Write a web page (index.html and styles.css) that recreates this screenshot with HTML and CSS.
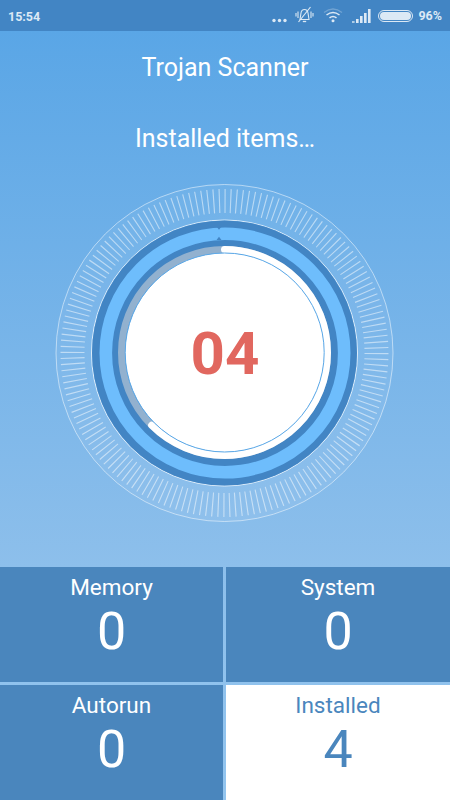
FILE: index.html
```html
<!DOCTYPE html>
<html lang="en">
<head>
  <meta charset="UTF-8" />
  <meta name="viewport" content="width=device-width, initial-scale=1.0"/>
  <title>Trojan Scanner</title>
  <link rel="stylesheet" href="styles.css">
</head>
<body>
  <div class="screen">
    <div class="statusbar">
      <span class="clock">15:54</span>
      <div class="status-icons">
        <svg class="ic-dots" width="15" height="5" viewBox="0 0 15 5">
          <circle cx="2" cy="2.5" r="1.7"/><circle cx="7.5" cy="2.5" r="1.7"/><circle cx="13" cy="2.5" r="1.7"/>
        </svg>
        <!-- vibrate / muted bell -->
        <svg class="ic-bell" width="19" height="19" viewBox="0 0 19 19" fill="none">
          <path d="M5 13.5 L6 7 Q6.5 3.5 9.5 3.5 Q12.5 3.5 13 7 L14 13.5 Z" stroke-width="1.1"/>
          <path d="M7.8 15.5 H11.2" stroke-width="1.3"/>
          <path d="M3 5.5 V12 M1 7 V10.5 M16 5.5 V12 M18 7 V10.5" stroke-width="1.1"/>
          <path d="M15.5 1 L3.5 16" stroke-width="1.2"/>
        </svg>
        <svg class="ic-wifi" width="20" height="15" viewBox="0 0 20 15" fill="none">
          <path d="M1 4.5 Q10 -2.5 19 4.5" stroke-width="1.4" opacity="0.3"/>
          <path d="M3.5 7 Q10 2 16.5 7" stroke-width="1.5"/>
          <path d="M6.5 9.8 Q10 7 13.5 9.8" stroke-width="1.5"/>
          <circle class="solid" cx="10" cy="12.7" r="1.5"/>
        </svg>
        <svg class="ic-signal" width="20" height="14" viewBox="0 0 20 14">
          <rect x="0" y="12" width="2.6" height="2" opacity="0.7"/>
          <rect x="4" y="10" width="2.6" height="4"/>
          <rect x="8" y="7" width="2.6" height="7"/>
          <rect x="12" y="4" width="2.6" height="10"/>
          <rect x="16" y="0" width="2.6" height="14"/>
        </svg>
        <div class="battery"><div class="battery-fill"></div></div>
        <span class="percent">96%</span>
      </div>
    </div>

    <div class="main">
      <h1 class="title">Trojan Scanner</h1>
      <p class="subtitle">Installed items…</p>

      <svg class="gauge" viewBox="0 0 450 345" xmlns="http://www.w3.org/2000/svg">
        <!-- outer band with ticks -->
        <circle class="band" cx="224.5" cy="172" r="168.5"/>
        <circle class="ticks" cx="224.5" cy="172" r="152" pathLength="840" transform="rotate(-90 224.5 172)"/>
        <circle class="band-inner" cx="224.5" cy="172" r="133"/>

        <!-- dark and light rings -->
        <circle class="ring-dark" cx="224.5" cy="172" r="132.5"/>
        <circle class="ring-light" cx="225" cy="172" r="119.2"/>
        <path class="notch" d="M216.5 45.5 h5 l-2.5 3.2 Z M216.5 59 h5 l-2.5 -3.2 Z"/>

        <!-- progress track, the thin line of the disc stays on top of it -->
        <circle class="track" cx="224.5" cy="171.5" r="103"/>
        <circle class="progress" cx="224.5" cy="171.5" r="103" pathLength="360" transform="rotate(-90 224.5 171.5)"/>
        <circle class="disc" cx="224.7" cy="171.5" r="99.5"/>

        <text class="count" x="225" y="193">04</text>
      </svg>

      <div class="stats">
        <div class="stat">
          <span class="stat-label">Memory</span>
          <span class="stat-value">0</span>
        </div>
        <div class="stat">
          <span class="stat-label">System</span>
          <span class="stat-value">0</span>
        </div>
        <div class="stat">
          <span class="stat-label">Autorun</span>
          <span class="stat-value">0</span>
        </div>
        <div class="stat active">
          <span class="stat-label">Installed</span>
          <span class="stat-value">4</span>
        </div>
      </div>
    </div>
  </div>
</body>
</html>
```

FILE: styles.css
```css
body {
  margin: 0;
  font-family: Roboto, "Liberation Sans", sans-serif;
  background: #5aa6e6;
}
.screen {
  width: 450px;
  height: 800px;
  display: flex;
  flex-direction: column;
  overflow: hidden;
}

/* status bar */
.statusbar {
  height: 31px;
  flex: none;
  background: #4285c4;
  color: #dce9f5;
  display: flex;
  align-items: center;
  justify-content: space-between;
  padding: 0 8px;
  box-sizing: border-box;
  font-size: 12.5px;
  font-weight: 700;
}
.clock {
  margin-top: 1px;
}
.status-icons {
  display: flex;
  align-items: center;
}
.status-icons svg {
  fill: #dce9f5;
  stroke: #dce9f5;
  stroke-width: 0;
}
.status-icons svg path {
  stroke: #dce9f5;
  fill: none;
}
.status-icons svg .solid {
  stroke: none;
}
.ic-dots {
  margin-top: 9px;
  margin-right: 8px;
}
.ic-bell {
  margin-right: 9px;
}
.ic-wifi {
  margin-right: 9px;
}
.ic-signal {
  margin-right: 6px;
  margin-top: 1px;
}
.battery {
  width: 35px;
  height: 12px;
  border: 1px solid #dce9f5;
  border-radius: 7px;
  box-sizing: border-box;
  padding: 1px;
  margin-right: 5px;
}
.battery-fill {
  height: 100%;
  background: #dce9f5;
  border-radius: 5px;
}
.percent {
  font-size: 12.5px;
}

/* main area */
.main {
  flex: 1;
  display: flex;
  flex-direction: column;
  align-items: center;
  background: linear-gradient(#5aa6e6, #8dbfeb 536px, #93c5ef);
}
.title {
  margin: 22px 0 0;
  height: 30px;
  line-height: 30px;
  font-size: 25px;
  font-weight: 400;
  color: #fff;
}
.subtitle {
  margin: 40px 0 0;
  height: 32px;
  line-height: 32px;
  font-size: 25px;
  color: #fff;
}

/* gauge */
.gauge {
  display: block;
  width: 450px;
  height: 345px;
  margin-top: 26px;
  flex: none;
}
.band {
  fill: rgba(255, 255, 255, 0.05);
  stroke: rgba(255, 255, 255, 0.5);
  stroke-width: 1;
}
.ticks {
  fill: none;
  stroke: rgba(255, 255, 255, 0.5);
  stroke-width: 24;
  stroke-dasharray: 1 4;
}
.band-inner {
  fill: none;
  stroke: rgba(255, 255, 255, 0.75);
  stroke-width: 1;
}
.ring-dark {
  fill: #4285c4;
}
.ring-light {
  fill: none;
  stroke: #6ebdfc;
  stroke-width: 12.6;
}
.notch {
  fill: #4285c4;
}
.track {
  fill: none;
  stroke: #92b1cf;
  stroke-width: 7;
}
.disc {
  fill: #fff;
  stroke: #5aa8e8;
  stroke-width: 1;
}
.progress {
  fill: none;
  stroke: #fff;
  stroke-width: 7;
  stroke-linecap: round;
  stroke-dasharray: 225 135;
}
.count {
  font-family: Roboto, "Liberation Sans", sans-serif;
  font-size: 60px;
  font-weight: 700;
  fill: #e1675f;
  text-anchor: middle;
}

/* stats grid */
.stats {
  margin-top: auto;
  width: 100%;
  display: grid;
  grid-template-columns: 223px 224px;
  grid-template-rows: 115px 115px;
  gap: 3px;
}
.stat {
  background: #4a86bd;
  color: #fff;
  display: flex;
  flex-direction: column;
  align-items: center;
}
.stat.active {
  background: #fff;
  color: #4a86bd;
}
.stat-label {
  margin-top: 6px;
  font-size: 22.5px;
  line-height: 28px;
}
.stat-value {
  font-size: 52px;
  font-weight: 400;
  line-height: 62px;
}
```
